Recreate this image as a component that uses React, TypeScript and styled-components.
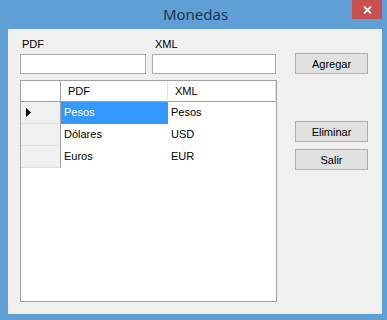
import React from 'react';
import styled, { createGlobalStyle } from 'styled-components';

const GlobalStyle = createGlobalStyle`
  html, body {
    margin: 0;
    padding: 0;
    background: #5f9fd6;
  }
`;

type Moneda = { pdf: string; xml: string };

const monedas: Moneda[] = [
  { pdf: 'Pesos', xml: 'Pesos' },
  { pdf: 'Dólares', xml: 'USD' },
  { pdf: 'Euros', xml: 'EUR' }
];

const Window = styled.div`
  width: 387px;
  height: 320px;
  background: #5f9fd6;
  display: flex;
  flex-direction: column;
  font-family: "Liberation Sans", Arial, sans-serif;
  font-size: 11px;
  color: #000;
  overflow: hidden;
`;

const TitleBar = styled.div`
  height: 29px;
  flex: none;
  display: flex;
  position: relative;
  align-items: center;
  justify-content: center;
`;

const Title = styled.div`
  font-family: "Noto Sans", "Open Sans", sans-serif;
  font-size: 15px;
  color: #1d3650;
  margin-left: 4px;
  margin-top: -1px;
`;

const CloseButton = styled.div`
  position: absolute;
  top: 0;
  left: 352px;
  width: 30px;
  height: 19px;
  background: #c75050;
  display: flex;
  align-items: center;
  justify-content: center;
`;

const Client = styled.div`
  margin: 0 5px 6px 8px;
  flex: 1;
  background: #f0f0f0;
  display: flex;
  padding: 8px 0 0 12px;
`;

const LeftPane = styled.div`
  width: 257px;
  display: flex;
  flex-direction: column;
`;

const Fields = styled.div`
  display: flex;
  gap: 6px;
`;

const Field = styled.div<{ $width: number }>`
  width: ${(p) => p.$width}px;
  display: flex;
  flex-direction: column;
`;

const Label = styled.div<{ $indent: number }>`
  height: 17px;
  line-height: 14px;
  padding-left: ${(p) => p.$indent}px;
`;

const TextBox = styled.div`
  height: 20px;
  box-sizing: border-box;
  background: #fff;
  border: 1px solid #adadad;
`;

const Grid = styled.div`
  margin-top: 6px;
  height: 222px;
  box-sizing: border-box;
  border: 1px solid #a0a0a0;
  background: #fff;
  display: flex;
  flex-direction: column;
`;

const Row = styled.div<{ $header?: boolean }>`
  display: grid;
  grid-template-columns: 40px 107px 1fr;
  height: ${(p) => (p.$header ? 21 : 22)}px;
`;

const HeadCell = styled.div<{ $corner?: boolean }>`
  background: #fff;
  border-bottom: 1px solid #a0a0a0;
  border-right: 1px solid ${(p) => (p.$corner ? '#a0a0a0' : '#e3e3e3')};
  box-sizing: border-box;
  display: flex;
  align-items: center;
  padding-left: 7px;
`;

const RowHeader = styled.div`
  background: #f0f0f0;
  border-right: 1px solid #a0a0a0;
  border-bottom: 1px solid #e0e0e0;
  box-sizing: border-box;
  display: flex;
  align-items: center;
  padding-left: 5px;
`;

const Cell = styled.div<{ $selected?: boolean }>`
  background: ${(p) => (p.$selected ? '#3399ff' : '#fff')};
  color: ${(p) => (p.$selected ? '#fff' : '#000')};
  display: flex;
  align-items: center;
  padding-left: 3px;
  padding-bottom: 2px;
`;

const RightPane = styled.div`
  margin-left: 18px;
  padding-top: 16px;
  display: flex;
  flex-direction: column;
`;

const Button = styled.div<{ $gap: number }>`
  width: 73px;
  height: 21px;
  margin-top: ${(p) => p.$gap}px;
  box-sizing: border-box;
  background: #e1e1e1;
  border: 1px solid #adadad;
  display: flex;
  align-items: center;
  justify-content: center;
`;

export default function App () {
  return (
    <>
      <GlobalStyle />
      <Window>
        <TitleBar>
          <Title>Monedas</Title>
          <CloseButton>
            <svg width="9" height="8" viewBox="0 0 9 8">
              <path d="M1 0.5 L8 7.5 M8 0.5 L1 7.5" stroke="#fff" strokeWidth="1.8" />
            </svg>
          </CloseButton>
        </TitleBar>
        <Client>
          <LeftPane>
            <Fields>
              <Field $width={126}>
                <Label $indent={2}>PDF</Label>
                <TextBox />
              </Field>
              <Field $width={124}>
                <Label $indent={3}>XML</Label>
                <TextBox />
              </Field>
            </Fields>
            <Grid>
              <Row $header>
                <HeadCell $corner />
                <HeadCell>PDF</HeadCell>
                <HeadCell>XML</HeadCell>
              </Row>
              {monedas.map((m, i) => (
                <Row key={m.pdf}>
                  <RowHeader>
                    {i === 0 && (
                      <svg width="5" height="9" viewBox="0 0 5 9">
                        <path d="M0 0 L5 4.5 L0 9 Z" fill="#000" />
                      </svg>
                    )}
                  </RowHeader>
                  <Cell $selected={i === 0}>{m.pdf}</Cell>
                  <Cell>{m.xml}</Cell>
                </Row>
              ))}
            </Grid>
          </LeftPane>
          <RightPane>
            <Button $gap={0}>Agregar</Button>
            <Button $gap={47}>Eliminar</Button>
            <Button $gap={7}>Salir</Button>
          </RightPane>
        </Client>
      </Window>
    </>
  );
}
